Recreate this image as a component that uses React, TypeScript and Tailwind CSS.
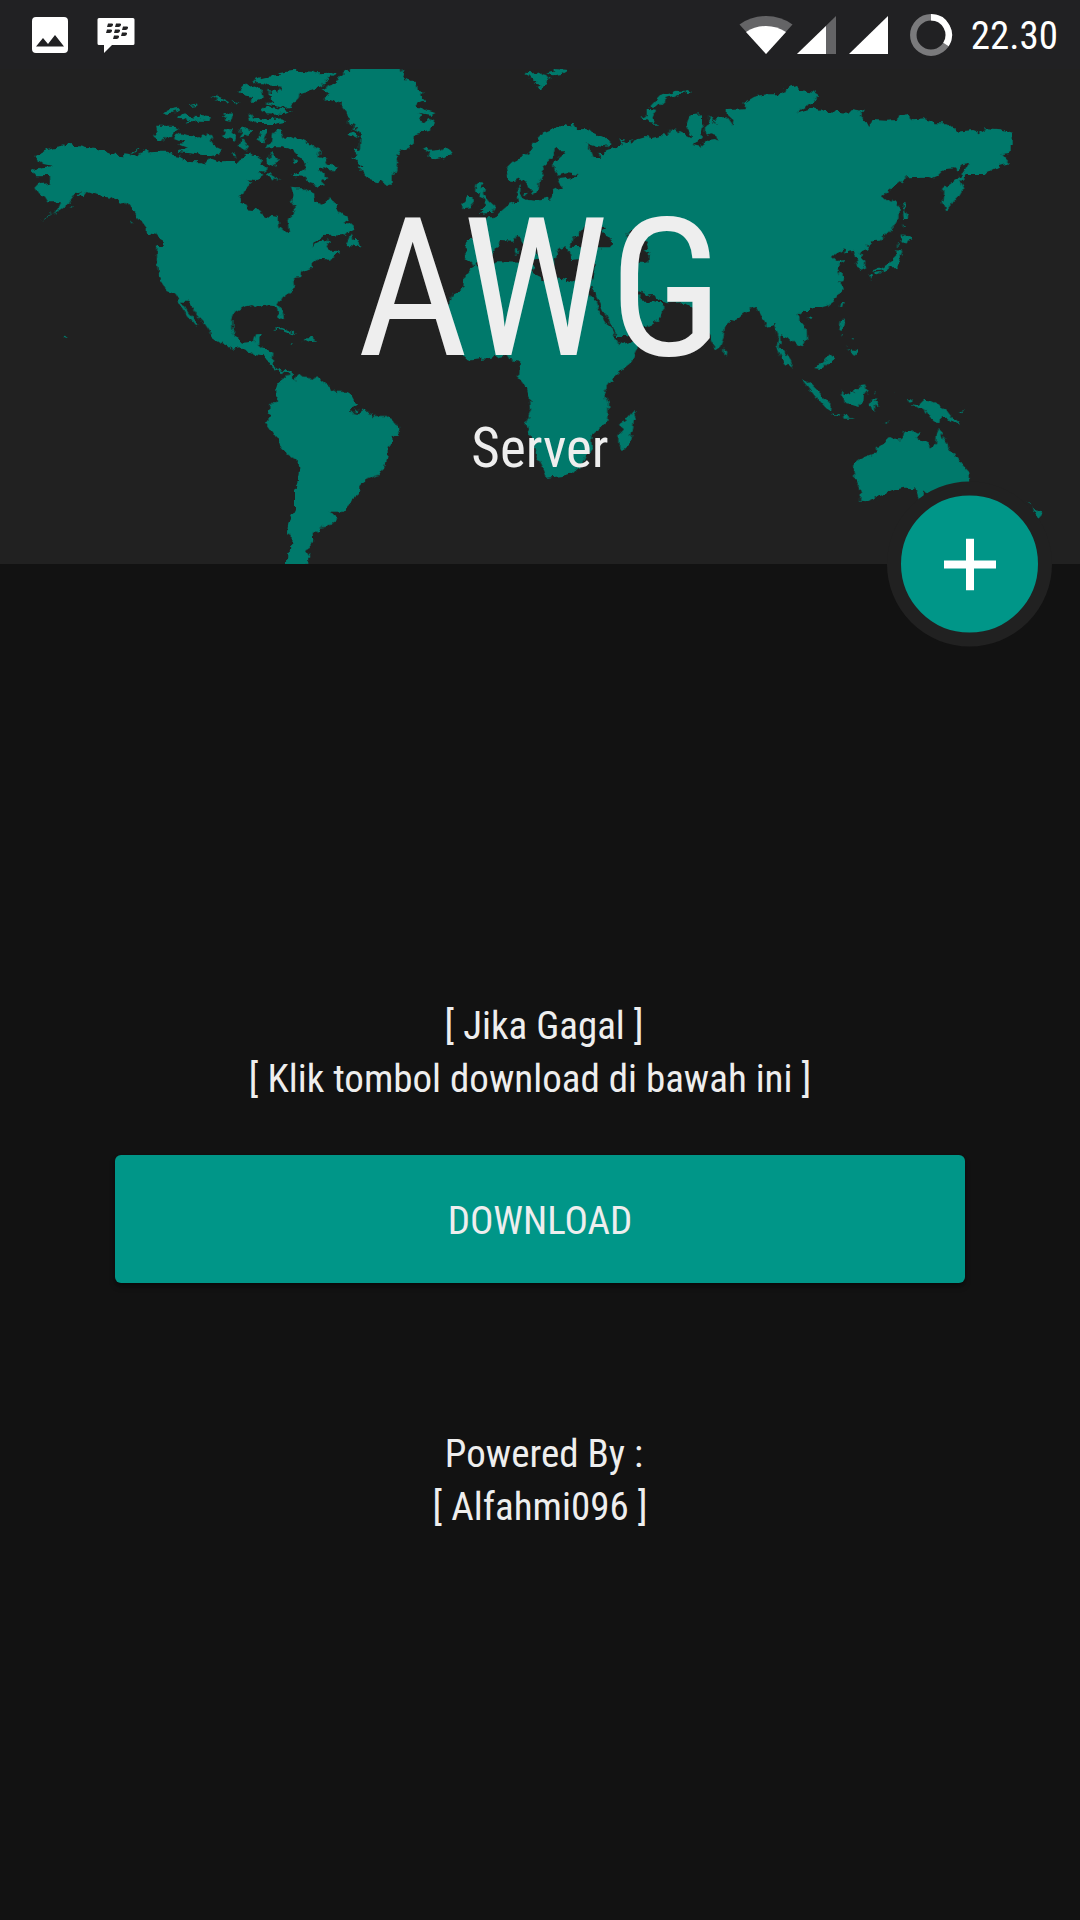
function WorldMap() {
  return (
    <svg viewBox="0 27 3240 1485" preserveAspectRatio="xMidYMid slice" className="absolute inset-0 h-full w-full" aria-hidden="true">
      <filter id="coast" x="0" y="0" width="100%" height="100%" colorInterpolationFilters="sRGB">
        <feTurbulence type="fractalNoise" baseFrequency="0.05" numOctaves="2" seed="4" result="noise" />
        <feDisplacementMap in="SourceGraphic" in2="noise" scale="22" xChannelSelector="R" yChannelSelector="G" />
      </filter>
      <g fill="#00796b" filter="url(#coast)">
        {/* North America, Greenland and the Arctic islands */}
        <g transform="translate(420 0)">
          <path d="M-317 292L-295 285-280 268-260 262-238 258-232 248-228 256-210 252-160 264-110 270-75 284-48 286-48 280-30 282-10 268 0 266-28 284-25 290 5 277 18 266 32 277 55 275 80 275 100 284 125 288 130 303 185 304 192 318 200 303 215 296 235 304 285 303 292 310 300 300 315 296 320 283 330 274 342 290 360 292 365 312 377 320 375 335 355 333 370 348 350 360 320 358 337 365 325 378 312 390 302 412 305 428 320 434 325 448 345 450 380 468 413 474 415 500 435 518 447 514 442 480 455 470 465 455 462 435 455 425 460 405 453 380 470 382 490 382 510 395 522 400 525 425 545 434 558 425 568 412 580 425 590 447 605 463 630 478 612 487 630 487 642 498 640 508 608 526 550 528 525 548 514 563 530 553 555 540 567 545 560 560 572 572 590 572 600 580 580 590 562 600 555 592 530 600 515 612 515 620 485 632 480 648 462 650 465 680 455 695 425 718 415 735 428 755 432 778 420 775 410 745 400 735 380 733 348 741 335 735 310 740 285 755 277 775 277 810 290 835 310 848 338 845 345 823 368 822 358 835 358 865 395 870 400 880 398 912 415 930 428 933 438 923 452 932 458 945 460 965 452 965 452 945 445 933 435 932 428 940 410 933 385 912 375 890 345 885 318 870 300 862 283 866 240 848 213 830 210 815 190 785 170 765 155 740 145 722 125 722 145 755 160 770 172 797 162 793 140 765 115 722 105 700 82 690 55 648 50 610 52 562 65 560 65 540 50 525 20 518 20 505 8 488 0 478-15 462-42 425-60 428-85 410-130 405-160 395-172 412-188 408-175 393-190 398-212 428-235 445-262 462-245 445-237 427-275 427-285 410-303 400-312 385-300 372-270 368-270 345-315 346-325 332-295 322-262 318-290 312Z" />
          <path d="M48 197L100 197 118 208 100 220 85 230 65 248 40 235 52 215ZM105 228L120 220 165 232 180 228 195 235 200 220 212 225 218 245 230 262 248 270 240 280 210 285 190 285 110 275 140 263 112 252 135 248 98 235ZM65 162L90 148 115 143 112 153 80 165ZM147 140L170 133 172 138 150 141ZM112 172L135 163 150 170 172 175 180 158 190 172 210 175 205 183 175 182 150 190 140 188 155 182ZM217 107L235 110 262 125 265 133 245 122 225 125 230 117ZM277 122L298 127 288 131ZM242 170L258 175 250 163 278 160 276 172 272 182 258 180ZM245 225L260 218 256 208 280 208 277 220 288 228 285 242 262 235ZM300 210L318 203 340 208 325 225 305 235ZM293 258L308 238 325 262 315 275ZM270 283L290 277 295 290ZM293 95L320 68 340 80 365 90 372 112 350 122 328 122 335 112 310 105Z" />
          <path d="M340 60L380 50 420 48 415 40 440 35 465 32 520 35 530 40 570 38 590 43 560 60 545 78 515 92 480 98 475 115 450 140 430 145 400 135 375 130 402 125 385 115 400 110 380 92 415 98 425 80 385 75 370 70 350 70ZM360 152L380 138 430 148 452 155 435 162 370 160ZM325 160L335 162 345 175 380 178 430 175 435 185 400 192 345 192 330 180ZM350 235L365 210 382 210 375 235 378 250 360 248ZM400 215L425 210 430 235 445 238 465 228 500 245 530 265 540 270 535 290 560 300 565 310 575 315 592 320 575 335 550 322 535 325 565 355 550 360 550 380 510 370 490 350 450 347 470 340 495 325 500 310 480 290 460 270 425 262 390 262 370 265 395 250ZM378 295L390 290 395 275 420 300 405 320 385 310ZM380 345L390 335 400 347 425 360 405 355 395 362ZM458 300L470 295 475 305 465 308ZM618 555L635 520 640 540 655 540 665 565 650 558ZM395 808L425 803 455 815 472 826 455 822 430 812ZM488 840L498 832 515 832 528 842 510 843 505 847ZM452 846L458 846 455 850Z" />
          <path d="M545 85L590 70 590 60 600 50 615 35 630 28 630 0 783 0 783 27 790 50 810 65 825 65 830 90 855 92 840 105 858 122 835 127 825 140 850 145 860 152 888 158 875 165 835 158 850 165 840 180 855 187 868 175 883 180 880 195 865 207 850 210 835 222 825 225 822 250 805 265 790 268 770 290 772 305 765 330 755 350 755 370 740 375 723 360 710 367 685 360 670 345 665 330 652 325 667 315 655 310 637 290 655 285 645 270 660 265 662 215 640 205 643 195 625 190 620 155 600 130 570 120 550 122 565 95ZM622 225L640 213 655 227 640 235ZM848 270L863 262 870 272 895 270 915 262 937 277 915 292 885 298 865 290 870 278Z" />
        </g>

        {/* South America */}
        <path transform="translate(690 810)" d="M188 150L195 150 198 140 210 134 220 142 255 147 265 142 280 155 300 168 302 178 320 185 350 186 365 197 378 222 365 235 363 248 388 252 400 242 425 250 427 258 465 258 485 272 507 285 508 305 488 325 485 340 473 347 473 378 465 410 450 432 430 436 405 448 388 465 388 488 365 508 358 525 345 546 305 545 318 570 312 583 272 590 265 610 248 607 250 630 240 650 225 660 242 683 225 702 225 730 170 730 172 668 183 660 185 618 173 612 180 570 195 540 195 480 203 455 208 410 200 390 170 370 152 350 148 335 128 305 108 277 122 258 113 250 118 232 142 207 142 168 160 140 182 137 180 125 188 125ZM375 240L388 237 386 246 377 246Z" />

        {/* Europe, Asia and Africa */}
        <g transform="translate(1290 0)">
          <path d="M230 325L250 305 295 280 310 250 340 220 385 200 405 192 420 198 430 192 440 207 470 208 500 222 540 240 540 255 525 262 500 258 465 247 480 262 490 290 515 294 505 278 520 280 530 270 550 265 575 255 568 235 585 235 578 245 590 252 610 240 650 228 665 232 695 225 712 228 720 208 745 215 785 235 785 225 768 200 775 180 785 165 815 163 815 185 822 200 815 225 800 245 788 255 810 260 835 240 855 237 865 242 858 225 840 220 828 225 828 195 838 185 838 165 845 180 865 190 850 178 870 172 890 172 908 198 910 180 890 162 890 150 940 148 948 138 940 128 970 110 1010 103 1050 103 1065 95 1068 85 1095 76 1110 90 1150 95 1168 108 1150 125 1120 142 1100 158 1125 150 1150 143 1180 152 1220 155 1255 158 1265 147 1298 152 1290 168 1320 195 1330 180 1370 182 1398 180 1402 168 1430 163 1450 178 1480 175 1510 190 1550 190 1570 205 1580 215 1630 210 1660 222 1668 205 1710 208 1745 218 1745 278 1715 282 1740 310 1710 318 1665 342 1610 342 1588 365 1600 388 1588 408 1570 425 1550 450 1538 425 1540 388 1570 365 1600 340 1618 312 1600 315 1580 332 1570 322 1545 325 1520 350 1505 357 1485 350 1430 352 1405 370 1357 410 1380 428 1395 420 1407 432 1405 475 1390 500 1350 542 1325 543 1308 565 1290 580 1306 600 1305 620 1287 630 1280 600 1270 588 1275 575 1245 580 1240 565 1205 590 1220 603 1245 600 1220 622 1240 655 1230 670 1240 685 1220 715 1190 738 1140 750 1125 750 1105 765 1110 785 1130 810 1132 840 1102 860 1075 835 1050 825 1052 850 1045 862 1058 868 1080 900 1087 927 1065 910 1040 862 1046 825 1035 795 1008 800 1000 775 980 740 955 750 885 800 880 835 870 860 858 868 845 850 838 830 800 760 785 740 760 727 710 730 690 720 665 705 650 708 625 690 625 710 640 725 665 725 690 730 705 745 690 775 650 800 620 805 590 828 560 828 545 800 520 750 490 690 488 680 478 690 500 730 510 760 535 795 555 825 560 845 575 852 600 845 630 855 620 870 605 905 570 935 540 965 522 990 535 1040 535 1080 510 1105 487 1125 488 1160 470 1185 460 1210 425 1240 400 1248 350 1253 340 1230 325 1200 315 1160 288 1090 303 1050 300 1015 290 985 267 955 270 905 235 900 225 885 180 893 115 902 95 885 60 850 50 740 70 700 100 680 102 655 132 620 125 605 105 600 108 540 150 540 155 500 165 475 190 475 200 465 235 435 265 425 258 400 258 390 272 375 270 400 290 420 320 422 360 415 372 390 395 380 385 357 440 350 445 345 410 340 385 347 370 325 370 310 405 280 400 268 375 268 370 290 335 320 345 350 330 360 325 395 305 403 290 370 280 355 255 365 240 365 230 325Z" />
          <g fill="#212121">
            <path d="M135 612L183 590 195 565 210 555 212 540 250 542 260 528 275 532 278 550 300 575 312 600 330 590 315 560 325 560 345 600 355 625 375 630 372 600 385 590 380 570 400 562 415 565 420 600 450 598 497 608 495 640 485 665 430 665 385 655 370 667 340 660 310 640 318 620 300 608 200 607 145 625Z" />
            <path d="M425 560L430 535 455 510 460 498 480 515 490 525 500 520 495 500 525 497 515 515 548 548 540 565 500 565 460 562ZM590 520L620 505 650 550 657 565 638 572 657 580 655 608 625 608 625 560 600 545Z" />
          </g>
          <path d="M258 560L268 565 265 585 258 580ZM283 400L292 398 290 408ZM140 368L160 372 152 385 168 388 162 405 180 425 197 440 190 458 145 462 160 452 148 445 165 435 162 420 148 415 150 400 135 395ZM100 425L115 408 130 408 132 430 120 445 100 448ZM283 38L310 40 325 35 335 45 350 48 362 55 348 62 345 75 330 90 320 82 335 75 310 70 325 65 300 55ZM348 40L375 35 372 27 415 30 395 42 370 46ZM635 172L650 165 650 152 672 155 668 170 680 192 655 188 650 178ZM655 145L690 108 740 95 765 95 770 88 782 92 778 98 750 102 710 115 680 142ZM565 1130L575 1110 570 1085 595 1075 612 1052 622 1075 612 1080 610 1100 595 1160 575 1168 565 1150ZM880 865L892 875 890 887 880 882Z" />
        </g>

        {/* Islands of East Asia */}
        <path transform="translate(2040 0)" d="M667 430L677 430 675 450 685 472 672 482ZM668 492L675 502 669 504ZM668 518L680 533 698 540 680 545 678 552 660 542 668 537ZM650 550L658 555 654 558ZM655 568L667 572 655 610 645 622 630 622 612 638 612 628 580 632 582 627 605 622 640 600 655 585ZM585 636L605 632 600 640 588 644ZM568 640L578 645 570 660ZM480 740L484 724 491 722 486 742ZM380 772L397 768 387 782ZM478 810L482 782 495 782 492 800 485 813ZM483 823L489 827 486 830ZM515 832L521 834 518 838ZM497 855L503 854 502 860Z" />

        {/* South-East Asia and Oceania */}
        <path transform="translate(2280 600)" d="M160 328L170 318 185 312 210 285 225 298 205 310 185 330ZM258 272L270 271 266 275ZM272 275L290 262 290 278 280 288 274 283ZM276 233L282 237 278 239ZM125 358L150 368 215 435 213 452 200 450 170 415ZM215 460L240 465 238 470 220 466ZM247 470L260 464 270 472 285 476 255 476ZM243 393L255 405 285 395 300 385 302 372 315 370 322 392 312 405 310 425 298 438 280 432 255 430 250 412ZM330 430L335 415 355 420 342 425 358 440 352 444 343 435 342 452 336 450ZM345 396L351 398 347 401ZM405 396L411 396 409 401ZM440 413L460 418 445 422ZM448 432L475 435 490 422 510 424 545 440 555 443 575 470 600 493 580 490 560 473 540 475 538 486 525 485 510 475 495 450 470 440ZM595 457L607 455 615 448 607 460ZM375 488L390 483 378 492ZM280 612L300 597 345 580 360 555 390 528 410 538 425 538 430 517 455 510 465 517 483 518 470 535 515 560 528 555 530 525 538 507 548 530 560 545 570 575 585 582 605 612 627 635 630 665 625 690 540 720 495 697 477 718 470 697 460 685 435 683 395 692 350 715 320 727 300 725 303 695 285 650 285 635 278 630ZM800 722L813 735 809 736ZM815 742L825 747 835 758 848 753 845 762 835 773 820 757Z" />
        {/* Aleutians, Haida Gwaii and Hawaii */}
        <path d="M120 479L158 458 140 472ZM205 445L222 438 215 446ZM392 484L401 487 398 495ZM190 830L202 831 198 838Z" />
      </g>
    </svg>
  );
}

function StatusBar() {
  return (
    <header className="flex h-[69px] items-center justify-between bg-[#212123] pr-[22px] pl-8 text-white">
      <div className="flex items-center gap-7">
        <svg width="36" height="36" viewBox="0 0 36 36" role="img" aria-label="Screenshot saved">
          <path fill="#fff" fillRule="evenodd" d="M4 0h28a4 4 0 0 1 4 4v28a4 4 0 0 1-4 4H4a4 4 0 0 1-4-4V4a4 4 0 0 1 4-4zM4 29.500h28L23 18l-7 9-5-6z" />
        </svg>
        <svg width="40" height="36" viewBox="0 0 40 36" role="img" aria-label="BBM message">
          <path fill="#fff" d="M3 1h34a1.500 1.500 0 0 1 1.500 1.500v24A1.500 1.500 0 0 1 37 28H16l-8 8v-8H3a1.500 1.500 0 0 1-1.500-1.500v-24A1.500 1.500 0 0 1 3 1z" />
          <path fill="#212123" d="M12 6.500h4q1.500 0 1 1.500-.5 2-2.500 2H11zM20 6.500h4q1.500 0 1 1.500-.5 2-2.500 2H19zM11 12.500h4q1.500 0 1 1.500-.5 2-2.500 2H10zM19 12.500h4q1.500 0 1 1.500-.5 2-2.500 2H18zM27 9.500h4q1.500 0 1 1.500-.5 2-2.500 2H26zM26 15.500h4q1.500 0 1 1.500-.5 2-2.500 2H25zM18 18.500h4q1.500 0 1 1.500-.5 2-2.500 2H17z" />
        </svg>
      </div>
      <div className="flex items-center">
        <svg width="54" height="40" viewBox="0 0 54 40" role="img" aria-label="Wi-Fi">
          <path fill="#646466" d="M.5 9.500Q12 1 27 1t26.500 8.500L27 39z" />
          <path fill="#fff" d="M7 17Q16 11 27 11t20 6L27 39z" />
        </svg>
        <svg className="ml-1" width="40" height="40" viewBox="0 0 40 40" role="img" aria-label="Mobile signal, SIM 1">
          <path fill="#646466" d="M39 1v38H0z" />
          <path fill="#fff" d="M29 11v28H0z" />
        </svg>
        <svg className="ml-3" width="40" height="40" viewBox="0 0 40 40" role="img" aria-label="Mobile signal, SIM 2">
          <path fill="#fff" d="M39 1v38H0z" />
        </svg>
        <svg className="ml-5" width="44" height="44" viewBox="0 0 44 44" fill="none" strokeWidth="6.500" role="img" aria-label="Battery">
          <circle cx="22" cy="22" r="17.700" stroke="#7a7a7c" />
          <path stroke="#fff" d="M22 4.300A17.700 17.700 0 0 1 37 31.500" />
        </svg>
        <time className="ml-[18px] pt-1 text-[39px] leading-none">22.30</time>
      </div>
    </header>
  );
}

export default function App() {
  return (
    <div className="flex min-h-screen flex-col bg-[#121212] font-['Roboto_Condensed',Roboto,sans-serif] text-[#eeeeee]">
      <StatusBar />
      <section className="relative flex h-[495px] flex-col items-center bg-[#212121]">
        <WorldMap />
        <h1 className="relative pt-[108px] text-[193px] leading-[225px]">AWG</h1>
        <p className="relative mt-[14px] text-[55px] leading-[64px]">Server</p>
        <button
          type="button"
          aria-label="Add"
          className="absolute right-7 bottom-0 flex size-[165px] translate-y-1/2 items-center justify-center rounded-full border-[14px] border-[#212121] bg-[#009688]"
        >
          <svg width="52" height="52" viewBox="0 0 52 52" fill="#fff" aria-hidden="true">
            <path d="M22 0h8v22h22v8H30v22h-8V30H0v-8h22z" />
          </svg>
        </button>
      </section>
      <main className="flex flex-col px-[115px] pt-[436px] text-center text-[39px] leading-[53px]">
        <div className="flex flex-col items-center">
          <p className="pl-2">[ Jika Gagal ]</p>
          <p className="pr-5">[ Klik tombol download di bawah ini ]</p>
        </div>
        <button type="button" className="mt-[49px] h-32 rounded-md bg-[#009688] pt-1 shadow-md shadow-black/40">
          DOWNLOAD
        </button>
        <footer className="mt-[145px]">
          <p className="pl-2">Powered By :</p>
          <p>[ Alfahmi096 ]</p>
        </footer>
      </main>
    </div>
  );
}
